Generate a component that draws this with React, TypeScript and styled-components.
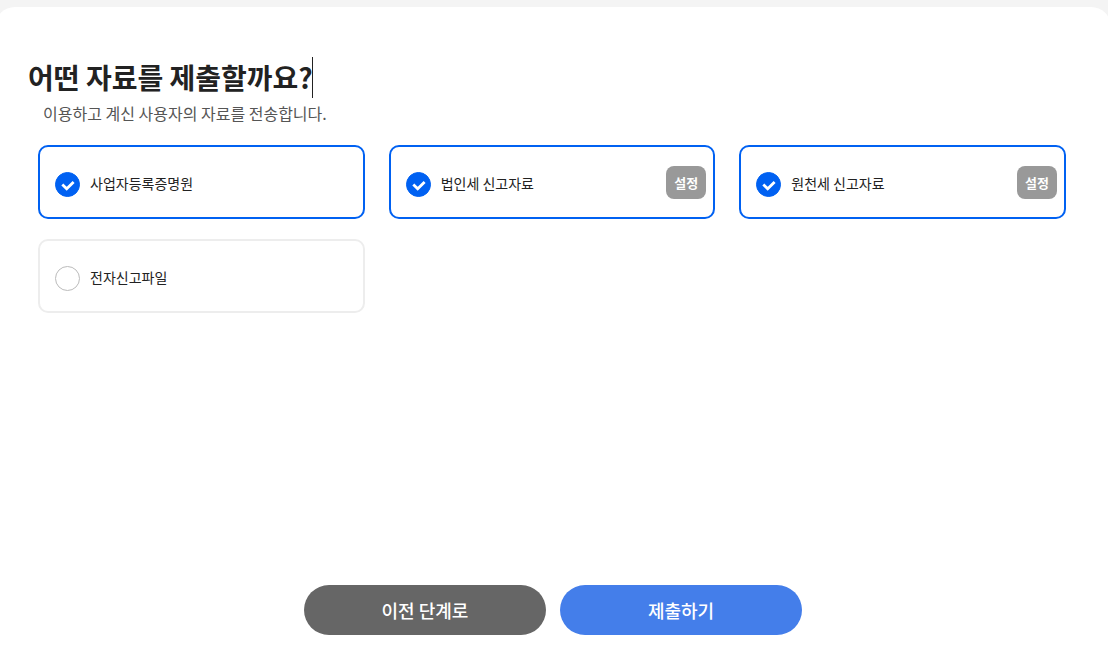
import React, { useState } from "react";
import styled, { createGlobalStyle } from "styled-components";

const GlobalStyle = createGlobalStyle`
  * { box-sizing: border-box; }
  body {
    margin: 0;
    background: #f4f4f4;
    color: #222;
    font-family: "Noto Sans CJK KR", "Noto Sans", sans-serif;
    overflow-x: clip;
  }
  button, input { font-family: inherit; }
`;

const Page = styled.div`
  display: flex;
  flex-direction: column;
  min-height: 100vh;
  padding-top: 7px;
`;

const Panel = styled.main`
  display: flex;
  flex: 1;
  flex-direction: column;
  margin: 0 -3px 0 -5px;
  padding: 50px 33px 23px;
  border-radius: 20px 20px 0 0;
  background: #fff;
`;

const Title = styled.h1`
  align-self: flex-start;
  margin: 0;
  box-shadow: inset -1px 0 #222;
  font-size: 28px;
  font-weight: 700;
  line-height: 41px;
`;

const Description = styled.p`
  margin: 4px 0 0 15px;
  color: #555;
  font-size: 16px;
  line-height: 22px;
`;

const CardGrid = styled.ul`
  display: grid;
  grid-template-columns: repeat(3, 1fr);
  gap: 20px 24px;
  margin: 21px 12px 40px 10px;
  padding: 0;
  list-style: none;
`;

const Card = styled.li<{ $selected: boolean }>`
  display: flex;
  align-items: center;
  min-height: 74px;
  padding: 0 7px 0 15px;
  border: 2px solid ${(p) => (p.$selected ? "#0061f2" : "#ededed")};
  border-radius: 10px;
`;

const Choice = styled.label`
  display: flex;
  flex: 1;
  align-items: center;
  gap: 10px;
  padding-top: 5px;
  font-size: 14px;
  line-height: 20px;
  cursor: pointer;
`;

const ChoiceName = styled.span`
  padding-bottom: 3px;
`;

const CheckWrap = styled.span`
  position: relative;
  display: flex;
`;

const CheckInput = styled.input`
  appearance: none;
  width: 25px;
  height: 25px;
  margin: 0;
  border: 1px solid #bbb;
  border-radius: 50%;
  background: #fff;
  cursor: pointer;

  &:checked {
    border-color: #0061f2;
    background: #0061f2;
  }
`;

const CheckMark = styled.svg`
  position: absolute;
  inset: 0;
  pointer-events: none;
`;

const SettingButton = styled.button`
  width: 40px;
  height: 33px;
  padding: 1px 0 0;
  border: 0;
  border-radius: 8px;
  background: #999;
  color: #fff;
  font-size: 13px;
  font-weight: 700;
  line-height: 20px;
  cursor: pointer;
`;

const Actions = styled.footer`
  display: flex;
  justify-content: center;
  gap: 14px;
  margin-top: auto;
`;

const ActionButton = styled.button<{ $primary?: boolean }>`
  width: 242px;
  height: 50px;
  border: 0;
  border-radius: 25px;
  background: ${(p) => (p.$primary ? "#447eea" : "#666")};
  color: #fff;
  font-size: 18px;
  font-weight: 500;
  line-height: 26px;
  cursor: pointer;
`;

const documents = [
  { id: "business", name: "사업자등록증명원", configurable: false },
  { id: "corporate", name: "법인세 신고자료", configurable: true },
  { id: "withholding", name: "원천세 신고자료", configurable: true },
  { id: "efile", name: "전자신고파일", configurable: false },
];

export default function App() {
  const [selected, setSelected] = useState<string[]>(["business", "corporate", "withholding"]);

  const toggle = (id: string) =>
    setSelected((ids) => (ids.includes(id) ? ids.filter((i) => i !== id) : [...ids, id]));

  return (
    <Page>
      <GlobalStyle />
      <Panel>
        <Title>어떤 자료를 제출할까요?</Title>
        <Description>이용하고 계신 사용자의 자료를 전송합니다.</Description>
        <CardGrid>
          {documents.map(({ id, name, configurable }) => {
            const checked = selected.includes(id);
            return (
              <Card key={id} $selected={checked}>
                <Choice htmlFor={id}>
                  <CheckWrap>
                    <CheckInput
                      id={id}
                      type="checkbox"
                      checked={checked}
                      onChange={() => toggle(id)}
                    />
                    {checked && (
                      <CheckMark width="25" height="25" viewBox="0 0 25 25" aria-hidden="true">
                        <path
                          d="M7.3 12.5 L11.7 16.7 L18.6 10.1"
                          fill="none"
                          stroke="#fff"
                          strokeWidth="2.8"
                        />
                      </CheckMark>
                    )}
                  </CheckWrap>
                  <ChoiceName>{name}</ChoiceName>
                </Choice>
                {configurable && <SettingButton type="button">설정</SettingButton>}
              </Card>
            );
          })}
        </CardGrid>
        <Actions>
          <ActionButton type="button">이전 단계로</ActionButton>
          <ActionButton type="button" $primary>
            제출하기
          </ActionButton>
        </Actions>
      </Panel>
    </Page>
  );
}
